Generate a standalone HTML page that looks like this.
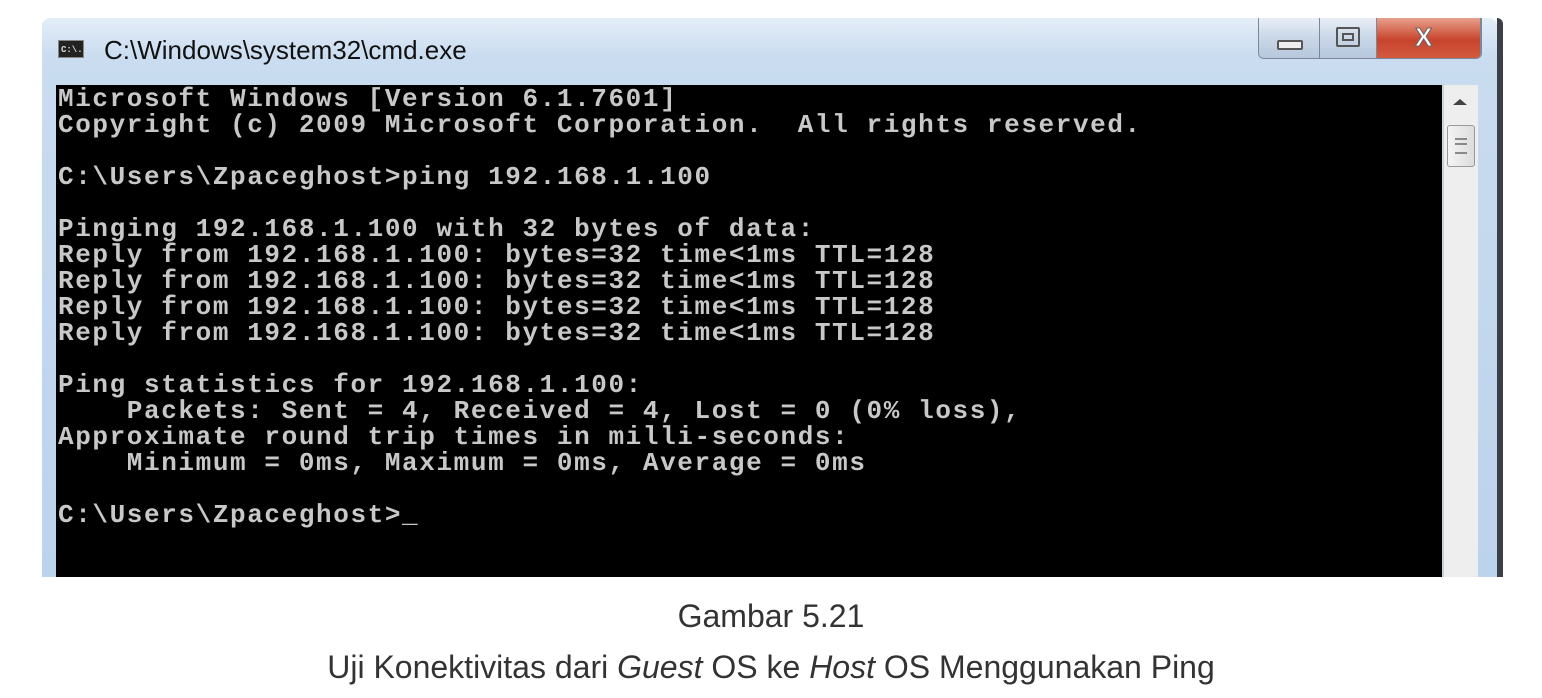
<!DOCTYPE html>
<html><head><style>
body{margin:0;width:1542px;height:698px;background:#fff;position:relative;overflow:hidden;font-family:"Liberation Sans",sans-serif}
.win{position:absolute;left:42px;top:18px;width:1455px;height:559px;background:linear-gradient(#e4eef8,#c9dcf0 40px,#bcd3ec);border-radius:8px 8px 0 0}
.edge{position:absolute;left:1497px;top:18px;width:6px;height:559px;background:#3a3f48;border-radius:0 6px 0 0}
.title{position:absolute;left:104px;top:35px;font-size:26px;color:#111}
.icon{position:absolute;left:58px;top:40px;width:26px;height:18px;background:#222;border:1px solid #888;color:#ddd;font:bold 9px "Liberation Mono",monospace;line-height:18px;padding-left:2px;box-sizing:border-box}
.con{position:absolute;left:56px;top:85px;width:1386px;height:492px;background:#000}
pre{margin:0;position:absolute;left:58px;top:86px;font:bold 26px/26px "Liberation Mono",monospace;letter-spacing:1.6px;color:#c8c8c8}
.sb{position:absolute;left:1443px;top:85px;width:34px;height:492px;background:#eeeeee;border-left:1px solid #ccc}
.thumb{position:absolute;left:1447px;top:125px;width:26px;height:40px;background:linear-gradient(90deg,#f4f4f4,#dcdcdc);border:1px solid #999;border-radius:3px}
.btns{position:absolute;left:1258px;top:18px;width:222px;height:40px;border:1px solid #7a8899;border-top:none;border-radius:0 0 6px 6px;overflow:hidden;display:flex}
.b{height:40px;background:linear-gradient(#e8eef6,#c7d5e6 55%,#b7c8dd);border-right:1px solid #7a8899;position:relative}
.x{background:linear-gradient(#e8a08c,#c8442c 55%,#d25a3e);flex:1}
.cap{position:absolute;width:1542px;text-align:center;font-size:32px;color:#333}
</style></head><body>
<div class="win"></div><div class="edge"></div>
<div class="icon">C:\.</div>
<div class="title">C:\Windows\system32\cmd.exe</div>
<div class="btns">
<div class="b" style="width:60px"><div style="position:absolute;left:18px;top:22px;width:22px;height:6px;border:2px solid #555;border-radius:2px;background:#eee"></div></div>
<div class="b" style="width:56px"><div style="position:absolute;left:16px;top:9px;width:20px;height:16px;border:2px solid #555;border-radius:2px"><div style="margin:4px;height:4px;border:2px solid #555"></div></div></div>
<div class="b x"><div style="position:absolute;left:38px;top:4px;color:#fff;font:bold 26px 'Liberation Sans';-webkit-text-stroke:1px #666">X</div></div>
</div>
<div class="con"></div>
<div class="sb"><div style="position:absolute;left:9px;top:14px;border:7px solid transparent;border-bottom:6px solid #444;border-top:none"></div></div>
<div class="thumb"><div style="margin:12px 7px;height:12px;border-top:2px solid #888;border-bottom:2px solid #888"><div style="margin-top:3px;border-top:2px solid #888"></div></div></div>
<pre>Microsoft Windows [Version 6.1.7601]
Copyright (c) 2009 Microsoft Corporation.  All rights reserved.

C:\Users\Zpaceghost>ping 192.168.1.100

Pinging 192.168.1.100 with 32 bytes of data:
Reply from 192.168.1.100: bytes=32 time&lt;1ms TTL=128
Reply from 192.168.1.100: bytes=32 time&lt;1ms TTL=128
Reply from 192.168.1.100: bytes=32 time&lt;1ms TTL=128
Reply from 192.168.1.100: bytes=32 time&lt;1ms TTL=128

Ping statistics for 192.168.1.100:
    Packets: Sent = 4, Received = 4, Lost = 0 (0% loss),
Approximate round trip times in milli-seconds:
    Minimum = 0ms, Maximum = 0ms, Average = 0ms

C:\Users\Zpaceghost>_</pre>
<div class="cap" style="top:598px">Gambar 5.21</div>
<div class="cap" style="top:649px">Uji Konektivitas dari <i>Guest</i> OS ke <i>Host</i> OS Menggunakan Ping</div>
</body></html>
